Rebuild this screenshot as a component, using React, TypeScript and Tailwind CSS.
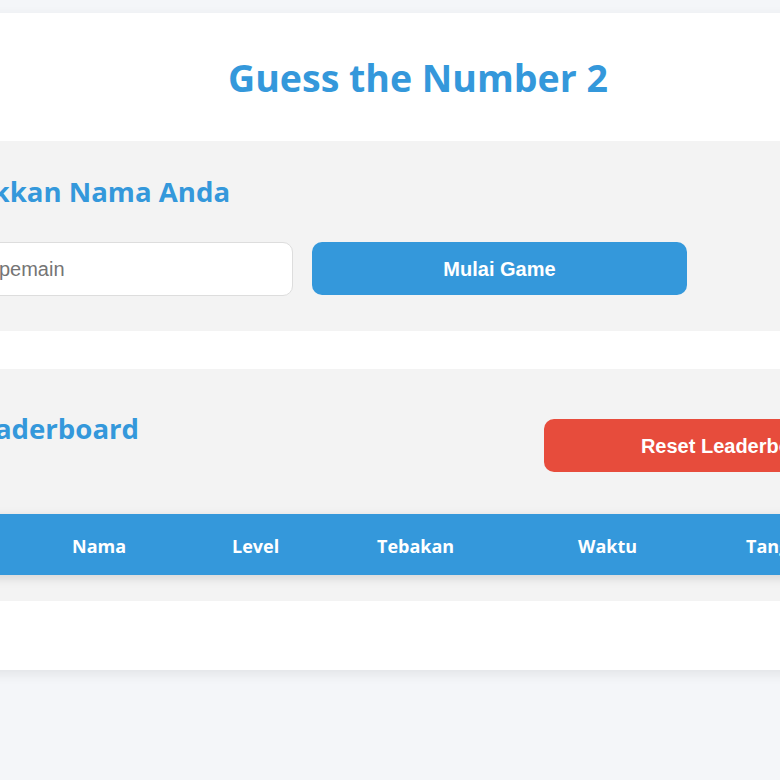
import { useState } from 'react'

const COLUMNS = [
  { label: 'No', width: 'w-[134px]' },
  { label: 'Nama', width: 'w-[160px]' },
  { label: 'Level', width: 'w-[145px]' },
  { label: 'Tebakan', width: 'w-[201px]' },
  { label: 'Waktu', width: 'w-[168px]' },
  { label: 'Tanggal', width: 'w-[192px]' },
] as const

export default function App() {
  const [name, setName] = useState('')

  return (
    <div className="min-h-screen w-full overflow-hidden bg-[#f4f6f9] pt-[13px] font-['Liberation_Sans',Arial,sans-serif]">
      {/* Main card (wider than the viewport, page is scrolled sideways) */}
      <div className="ml-[-142px] w-[1120px] bg-white pt-[42px] pb-[69px] shadow-[0_4px_12px_rgba(0,0,0,0.08)]">
        <h1 className="mb-[40px] text-center font-['Open_Sans','Noto_Sans',sans-serif] text-[37.5px] leading-[46px] font-bold text-[#3498db]">
          Guess the Number 2
        </h1>

        {/* Player name */}
        <section className="bg-[#f3f3f3] px-[60px] pt-[32px] pb-[35px]">
          <h2 className="font-['Open_Sans','Noto_Sans',sans-serif] text-[27.6px] leading-[36px] font-bold text-[#3498db]">
            Masukkan Nama Anda
          </h2>
          <div className="mt-[33px] flex items-start gap-[19px]">
            <input
              value={name}
              onChange={(e) => setName(e.target.value)}
              placeholder="Nama pemain"
              className="h-[54px] w-[375px] rounded-[10px] border border-[#dddddd] bg-white pl-[21px] font-['Liberation_Sans',Arial,sans-serif] text-[20px] text-[#333] outline-none placeholder:text-[#757575]"
            />
            <button className="h-[53px] w-[375px] rounded-[10px] bg-[#3498db] font-['Liberation_Sans',Arial,sans-serif] text-[20px] font-bold text-white">
              Mulai Game
            </button>
          </div>
        </section>

        {/* Leaderboard */}
        <section className="mt-[38px] bg-[#f3f3f3] px-[60px] pt-[41px] pb-[26px]">
          <div className="flex items-start justify-between">
            <h2 className="pl-[45px] font-['Open_Sans','Noto_Sans',sans-serif] text-[27.6px] leading-[36px] font-bold text-[#3498db]">
              Leaderboard
            </h2>
            <button className="mt-[9px] mr-[-1px] h-[53px] w-[375px] rounded-[10px] bg-[#e74c3c] font-['Liberation_Sans',Arial,sans-serif] text-[20px] font-bold text-white">
              Reset Leaderboard
            </button>
          </div>

          <div className="mt-[42px] flex h-[61px] bg-[#3498db] shadow-[0_3px_10px_rgba(0,0,0,0.13)]">
            {COLUMNS.map((col) => (
              <div
                key={col.label}
                className={`${col.width} pt-[20px] pl-[20px] font-['Open_Sans','Noto_Sans',sans-serif] text-[18px] leading-[25px] font-bold text-white`}
              >
                {col.label}
              </div>
            ))}
          </div>
        </section>
      </div>
    </div>
  )
}
